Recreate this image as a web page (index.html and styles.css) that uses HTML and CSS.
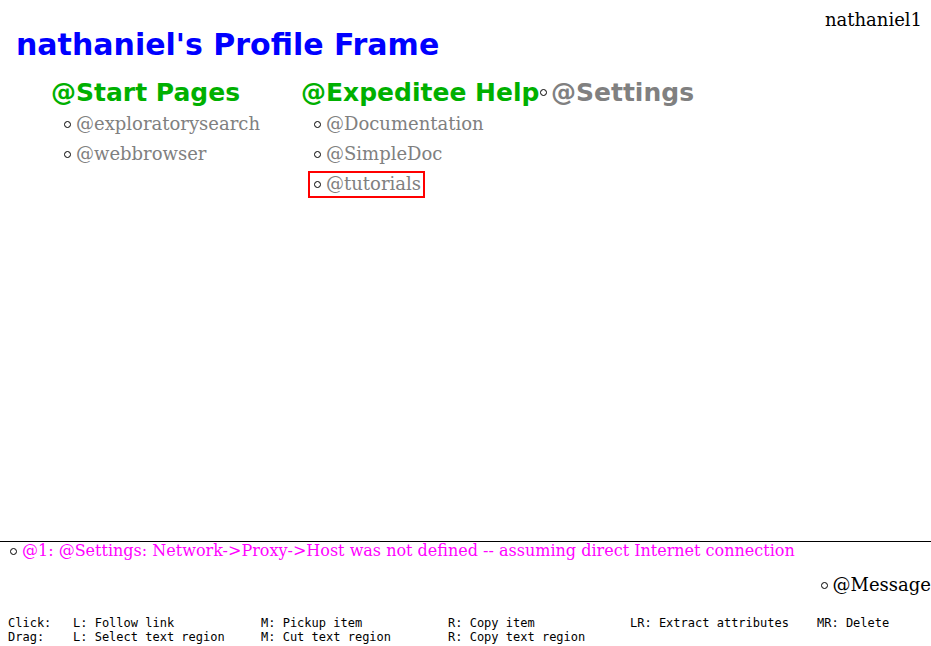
FILE: index.html
```html
<!DOCTYPE html>
<html>
<head>
<meta charset="utf-8">
<link rel="stylesheet" href="styles.css">
</head>
<body>
<div class="page">
  <div class="frame">
    <div class="user">nathaniel1</div>
    <h1 class="title">nathaniel's Profile Frame</h1>
    <div class="cols">
      <div class="col col-start">
        <div class="head green">@Start Pages</div>
        <div class="item"><span class="dot"></span><span class="link">@exploratorysearch</span></div>
        <div class="item"><span class="dot"></span><span class="link">@webbrowser</span></div>
      </div>
      <div class="col col-help">
        <div class="head green">@Expeditee Help</div>
        <div class="item"><span class="dot"></span><span class="link">@Documentation</span></div>
        <div class="item"><span class="dot"></span><span class="link">@SimpleDoc</span></div>
        <div class="item"><span class="box"><span class="dot"></span><span class="link">@tutorials</span></span></div>
      </div>
      <div class="col col-settings">
        <div class="head gray"><span class="dot hdot"></span>@Settings</div>
      </div>
    </div>
  </div>
  <div class="messages">
    <div class="msg"><span class="dot"></span><span>@1: @Settings: Network-&gt;Proxy-&gt;Host was not defined -- assuming direct Internet connection</span></div>
    <div class="msglink"><span class="dot"></span><span>@Message</span></div>
  </div>
  <div class="help">
    <div class="hrow"><span class="c0">Click:</span><span class="c1">L: Follow link</span><span class="c2">M: Pickup item</span><span class="c3">R: Copy item</span><span class="c4">LR: Extract attributes</span><span class="c5">MR: Delete</span></div>
    <div class="hrow"><span class="c0">Drag:</span><span class="c1">L: Select text region</span><span class="c2">M: Cut text region</span><span class="c3">R: Copy text region</span></div>
  </div>
</div>
</body>
</html>
```

FILE: styles.css
```css
html, body {
  margin: 0;
  padding: 0;
  background: #fff;
}
.page {
  width: 931px;
  height: 646px;
  display: flex;
  flex-direction: column;
  overflow: hidden;
}
.frame {
  height: 541px;
  display: flex;
  flex-direction: column;
}
.user {
  font-family: "DejaVu Serif", serif;
  font-size: 18px;
  line-height: 22px;
  color: #000;
  text-align: right;
  padding: 9px 9px 0 0;
  height: 22px;
}
.title {
  margin: 0;
  font-family: "DejaVu Sans", sans-serif;
  font-weight: bold;
  font-size: 30px;
  line-height: 34px;
  color: #0000ff;
  padding-left: 16px;
  margin-top: -3px;
}
.cols {
  display: flex;
  padding-left: 52px;
  margin-top: 14px;
}
.col-start { width: 250px; }
.col-help { width: 238px; }
.head {
  font-family: "DejaVu Sans", sans-serif;
  font-weight: bold;
  font-size: 25px;
  line-height: 33px;
  white-space: nowrap;
}
.green { color: #00b000; margin-left: -1px; }
.gray { color: #808080; display: flex; align-items: center; }
.item {
  font-family: "DejaVu Serif", serif;
  font-size: 18px;
  line-height: 30px;
  height: 30px;
  color: #808080;
  padding-left: 12px;
  display: flex;
  align-items: center;
}
.box {
  display: flex;
  align-items: center;
  border: 2px solid #ff0000;
  margin-left: -6px;
  padding: 0 2px 0 4px;
  height: 23px;
}
.dot {
  display: inline-block;
  width: 5px;
  height: 5px;
  border: 1px solid #000;
  border-radius: 50%;
  margin-right: 5px;
  flex: none;
}
.hdot { margin-right: 4px; }
.messages {
  border-top: 1px solid #000;
  height: 62px;
  display: flex;
  flex-direction: column;
  font-family: "DejaVu Serif", serif;
}
.msg {
  color: #ff00ff;
  font-size: 16px;
  line-height: 18px;
  padding: 0 0 0 10px;
  display: flex;
  align-items: center;
  white-space: nowrap;
}
.msglink {
  color: #000;
  font-size: 18px;
  line-height: 22px;
  margin-top: 14px;
  display: flex;
  align-items: center;
  justify-content: flex-end;
  white-space: nowrap;
}
.help {
  padding: 12px 0 0 8px;
  font-family: "DejaVu Sans Mono", monospace;
  font-size: 12px;
  line-height: 14px;
  color: #000;
}
.hrow {
  display: flex;
  white-space: pre;
}
.c0 { width: 65px; }
.c1 { width: 188px; }
.c2 { width: 187px; }
.c3 { width: 182px; }
.c4 { width: 187px; }
```
